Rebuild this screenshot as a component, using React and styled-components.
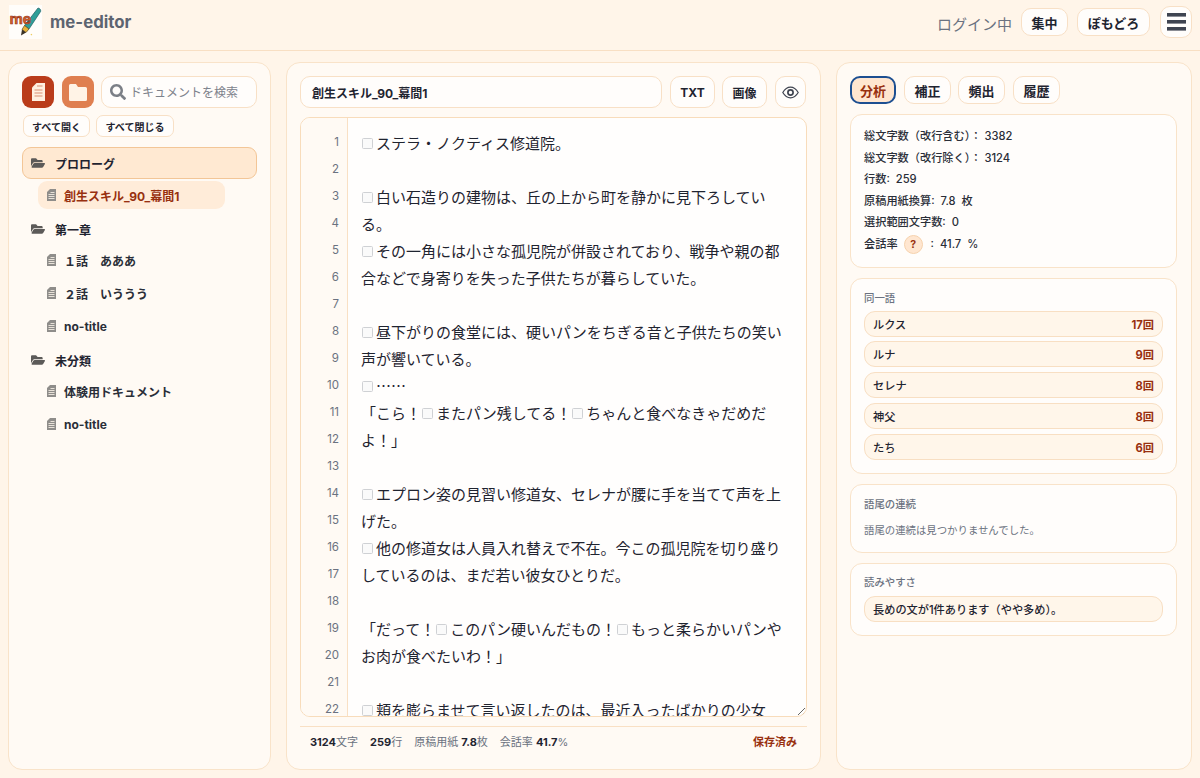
import styled, { createGlobalStyle } from 'styled-components';
import { FaFolderOpen, FaSearch } from 'react-icons/fa';

const font = `Inter, "Noto Sans CJK JP", sans-serif`;

const GlobalStyle = createGlobalStyle`
    * { box-sizing: border-box; }
    html, body {
        margin: 0;
        height: 100%;
        background: #fff5e9;
        color: #1f2430;
        font-family: ${font};
    }
`;

const Page = styled.div`
    height: 778px;
    display: flex;
    flex-direction: column;
    overflow: hidden;
`;

// header
const Header = styled.header`
    height: 51px;
    flex: none;
    display: flex;
    align-items: center;
    padding: 0 8px 6px 9px;
    border-bottom: 1px solid #f8dfc3;
`;

const Brand = styled.div`
    display: flex;
    align-items: center;
    gap: 8px;
    margin-right: auto;
    font-size: 16.8px;
    font-weight: 700;
    color: #5d6470;
    svg { display: block; }
`;

const LoginText = styled.span`
    font-size: 15px;
    color: #6b7280;
    margin: 2px 9px 0 0;
`;

const Button = styled.button`
    font-family: ${font};
    font-weight: 700;
    font-size: ${p => p.$size || 12}px;
    color: #1f2430;
    background: ${p => (p.$active ? '#ffe6d0' : '#fffdfb')};
    border: ${p => (p.$active ? '2px solid #1d4f91' : '1px solid #f8e0c6')};
    border-radius: ${p => p.$radius || 10}px;
    padding: 0;
    width: ${p => p.$w}px;
    height: ${p => p.$h}px;
    margin-right: ${p => p.$mr || 0}px;
    display: inline-flex;
    align-items: center;
    justify-content: center;
    flex: none;
`;

const TabButton = styled(Button)`
    font-size: 13px;
    color: ${p => (p.$active ? '#98300f' : '#1f2430')};
`;

const Bars = styled.svg`
    width: 19px;
    height: 18px;
    fill: #3f4450;
`;

// columns
const Main = styled.main`
    flex: 1;
    display: grid;
    grid-template-columns: 263px 535px 356px;
    gap: 15px;
    padding: 11px 8px 8px;
    min-height: 0;
`;

const Panel = styled.section`
    background: #fffaf4;
    border: 1px solid #f9e3c9;
    border-radius: 14px;
    padding: 13px;
    display: flex;
    flex-direction: column;
    min-height: 0;
`;

// left panel
const ToolRow = styled.div`
    display: flex;
    align-items: center;
    height: 32px;
`;

const SquareButton = styled.button`
    width: 32px;
    height: 32px;
    border: 0;
    border-radius: 9px;
    margin-right: ${p => p.$mr}px;
    background: ${p => p.$bg};
    display: flex;
    align-items: center;
    justify-content: center;
    padding: 0;
    flex: none;
`;

const SearchBox = styled.label`
    flex: 1;
    height: 32px;
    display: flex;
    align-items: center;
    gap: 4px;
    padding: 0 8px;
    background: #fffdfb;
    border: 1px solid #f8e0c6;
    border-radius: 10px;
    color: #7b7f86;
    font-size: 16px;
    svg { flex: none; }
`;

const SearchInput = styled.input`
    border: 0;
    outline: 0;
    background: none;
    width: 100%;
    padding: 0;
    font-family: ${font};
    font-size: 12px;
    &::placeholder { color: #7d828b; opacity: 1; }
`;

const ExpandRow = styled.div`
    display: flex;
    gap: 6px;
    margin: 7px 0 10px 1px;
`;

const SmallButton = styled(Button)`
    font-size: 10px;
    border-radius: 7px;
`;

const FolderRow = styled.div`
    height: 32px;
    display: flex;
    align-items: center;
    gap: 10px;
    padding-left: 8px;
    font-size: 12px;
    font-weight: 700;
    border-radius: 9px;
    border: 1px solid ${p => (p.$active ? '#f3c697' : 'transparent')};
    background: ${p => (p.$active ? '#ffe9d2' : 'transparent')};
    margin-top: ${p => p.$mt || 0}px;
    svg { color: #5c5a58; font-size: 14px; flex: none; }
`;

const DocRow = styled.div`
    height: 28px;
    width: 187px;
    margin: ${p => p.$mt || 0}px 0 0 16px;
    display: flex;
    align-items: center;
    gap: 8px;
    padding-left: 9px;
    font-size: 12px;
    font-weight: 700;
    border-radius: 9px;
    background: ${p => (p.$active ? '#ffecd9' : 'transparent')};
    color: ${p => (p.$active ? '#98300f' : '#2a2e38')};
    white-space: pre;
`;

const DocIconSvg = styled.svg`
    width: 9px;
    height: 12px;
    flex: none;
`;

const DocIcon = () => (
    <DocIconSvg viewBox="0 0 9 12">
        <path d="M3 0h6v12H0V3z" fill="#8f8d8a" />
        <path d="M3.500 3.500h4M1.500 5.500h6M1.500 7.500h6M1.500 9.500h6" stroke="#fff6ec" strokeWidth=".8" />
    </DocIconSvg>
);

// editor panel
const TitleRow = styled.div`
    display: flex;
    align-items: center;
    height: 32px;
    margin-bottom: 9px;
`;

const TitleInput = styled.input`
    width: 362px;
    height: 32px;
    margin-right: 8px;
    padding: 0 11px;
    flex: none;
    font-family: ${font};
    font-size: 12px;
    font-weight: 700;
    color: #1f2430;
    background: #fffdfb;
    border: 1px solid #f8e0c6;
    border-radius: 10px;
    outline: 0;
`;

const Editor = styled.div`
    height: 600px;
    display: flex;
    background: #fffefd;
    border: 1px solid #f8dcbb;
    border-radius: 10px;
    overflow: hidden;
`;

const Gutter = styled.div`
    width: 47px;
    flex: none;
    padding: 11px 8px 0 0;
    border-right: 1px solid #f9e0c4;
    background: #fffaf4;
    text-align: right;
`;

const LineNo = styled.div`
    height: 27px;
    line-height: 27px;
    font-size: 11.5px;
    color: #6b7280;
`;

const TextArea = styled.div`
    flex: 1;
    padding: 11px 14px 0 13px;
    overflow: hidden;
    resize: both;
    font-family: "Noto Sans CJK JP", sans-serif;
    font-size: 15px;
    line-height: 27px;
    color: #1f2430;
`;

const Para = styled.div`
    min-height: 27px;
`;

const Mark = styled.span`
    display: inline-block;
    width: 15px;
    height: 9px;
    position: relative;
    &::before {
        content: '';
        position: absolute;
        left: 1px;
        top: -2px;
        width: 9px;
        height: 9px;
        background: #fafafa;
        border: 1px solid #cfd1d4;
        border-radius: 1.5px;
    }
`;

const StatusBar = styled.div`
    margin-top: 9px;
    padding: 6px 10px 0;
    border-top: 1px solid #f9e0c4;
    display: flex;
    align-items: center;
    font-size: 11px;
    color: #6b7280;
    b { color: #1f2430; font-weight: 700; }
`;

const StatusItem = styled.span`
    margin-right: 12px;
`;

const Saved = styled.span`
    margin-left: auto;
    color: #98300f;
    font-weight: 700;
    font-size: 11px;
`;

// analysis panel
const Tabs = styled.div`
    display: flex;
    align-items: center;
    height: 28px;
    margin-bottom: 10px;
`;

const Card = styled.div`
    width: 327px;
    background: #fffdfb;
    border: 1px solid #f9e3c9;
    border-radius: 12px;
    padding: ${p => p.$pad};
    margin-bottom: 10px;
`;

const StatLine = styled.div`
    font-size: 11.2px;
    font-weight: 500;
    line-height: 21.6px;
    height: 21.6px;
    color: #2a2e38;
    white-space: pre;
    display: flex;
    align-items: center;
`;

const Help = styled.span`
    width: 19px;
    height: 19px;
    border-radius: 50%;
    background: #ffe6d0;
    border: 1px solid #f6d2ad;
    color: #98300f;
    font-size: 10.5px;
    font-weight: 700;
    display: inline-flex;
    align-items: center;
    justify-content: center;
    margin: 0 8px 0 6px;
`;

const CardLabel = styled.div`
    font-size: 10.4px;
    line-height: 14px;
    font-weight: 500;
    color: #6b7280;
    margin-bottom: ${p => p.$mb}px;
`;

const Note = styled.div`
    font-size: 10.4px;
    line-height: 14px;
    color: #6b7280;
`;

const Pill = styled.div`
    height: 26px;
    display: flex;
    align-items: center;
    justify-content: space-between;
    padding: 0 8px;
    background: #fff6ea;
    border: 1px solid #f8dfc3;
    border-radius: 11px;
    font-size: 11.2px;
    font-weight: 500;
    color: #1f2430;
    & + & { margin-top: 4.75px; }
`;

const Count = styled.span`
    color: #98300f;
    font-weight: 700;
`;

const LogoText = styled.text`
    font-family: "Liberation Sans", sans-serif;
    font-weight: 700;
    font-size: 15px;
`;

const Logo = () => (
    <svg width="33" height="34" viewBox="0 0 33 34">
        <rect width="33" height="34" fill="#fffdfa" />
        <path d="M29 3c2 .2 3 1.800 2.600 3.500L20 24l-4.500-3.500z" fill="#2f9f98" stroke="#1d5f63" strokeWidth=".7" />
        <path d="M15.500 20.500L20 24l-3 3.500-4-3z" fill="#e8b23a" stroke="#5a4620" strokeWidth=".7" />
        <path d="M13 24.500l4 3-5 3z" fill="#3a3226" />
        <path d="M22 29l.8 1.200" stroke="#eccb5a" strokeWidth="1.200" />
        <LogoText x="0.500" y="19" fill="#d9662a" stroke="#8e2f1c" strokeWidth=".6">me</LogoText>
    </svg>
);

const DocButtonIcon = () => (
    <svg width="13" height="18" viewBox="0 0 13 18">
        <path d="M4.500 0H13v18H0V4.500z" fill="#fff0e0" />
        <path d="M5 3h5.500M2.500 7h8M2.500 10h8M2.500 13h8" stroke="#d98f73" strokeWidth="1" />
    </svg>
);

const FolderButtonIcon = () => (
    <svg width="18" height="17" viewBox="0 0 18 17">
        <path d="M1.500 0H7l2 3h7.500A1.500 1.500 0 0 1 18 4.500v11a1.500 1.500 0 0 1-1.500 1.500h-15A1.500 1.500 0 0 1 0 15.500v-14A1.500 1.500 0 0 1 1.500 0z" fill="#fff3e6" />
    </svg>
);

const Eye = () => (
    <svg width="17" height="13" viewBox="0 0 17 13" fill="none" stroke="#3f4450" strokeWidth="1.2">
        <path d="M.8 6.500C3 2.800 5.500 1.200 8.500 1.200s5.500 1.600 7.700 5.300c-2.200 3.700-4.700 5.300-7.700 5.300S3 10.200.8 6.500z" />
        <circle cx="8.500" cy="6.500" r="2.600" strokeWidth="1.700" />
    </svg>
);

const lines = Array.from({ length: 22 }, (_, i) => i + 1);
const repeated = [['ルクス', 17], ['ルナ', 9], ['セレナ', 8], ['神父', 8], ['たち', 6]];

export default function App() {
    return (
        <Page lang="ja">
            <GlobalStyle />
            <Header>
                <Brand>
                    <Logo />
                    me-editor
                </Brand>
                <LoginText>ログイン中</LoginText>
                <Button $w={47} $h={28} $mr={9} $size={13}>集中</Button>
                <Button $w={73} $h={28} $mr={10} $size={13}>ぽもどろ</Button>
                <Button $w={32} $h={32}>
                    <Bars viewBox="0 0 19 18">
                        <rect width="19" height="3.600" y="0" />
                        <rect width="19" height="3.600" y="7" />
                        <rect width="19" height="3.600" y="14" />
                    </Bars>
                </Button>
            </Header>
            <Main>
                <Panel>
                    <ToolRow>
                        <SquareButton $bg="#ba3c1a" $mr={8}><DocButtonIcon /></SquareButton>
                        <SquareButton $bg="#df7f50" $mr={7}><FolderButtonIcon /></SquareButton>
                        <SearchBox>
                            <FaSearch />
                            <SearchInput placeholder="ドキュメントを検索" />
                        </SearchBox>
                    </ToolRow>
                    <ExpandRow>
                        <SmallButton $w={67} $h={22}>すべて開く</SmallButton>
                        <SmallButton $w={78} $h={22}>すべて閉じる</SmallButton>
                    </ExpandRow>
                    <FolderRow $active><FaFolderOpen />プロローグ</FolderRow>
                    <DocRow $active $mt={2}><DocIcon />創生スキル_90_幕間1</DocRow>
                    <FolderRow $mt={4}><FaFolderOpen />第一章</FolderRow>
                    <DocRow $mt={1}><DocIcon />１話　あああ</DocRow>
                    <DocRow $mt={5}><DocIcon />２話　いううう</DocRow>
                    <DocRow $mt={5}><DocIcon />no-title</DocRow>
                    <FolderRow $mt={4}><FaFolderOpen />未分類</FolderRow>
                    <DocRow $mt={1}><DocIcon />体験用ドキュメント</DocRow>
                    <DocRow $mt={5}><DocIcon />no-title</DocRow>
                </Panel>

                <Panel>
                    <TitleRow>
                        <TitleInput defaultValue="創生スキル_90_幕間1" />
                        <Button $w={45} $h={32} $mr={7}>TXT</Button>
                        <Button $w={45} $h={32} $mr={8}>画像</Button>
                        <Button $w={31} $h={32}><Eye /></Button>
                    </TitleRow>
                    <Editor>
                        <Gutter>
                            {lines.map(n => <LineNo key={n}>{n}</LineNo>)}
                        </Gutter>
                        <TextArea>
                            <Para><Mark />ステラ・ノクティス修道院。</Para>
                            <Para />
                            <Para><Mark />白い石造りの建物は、丘の上から町を静かに見下ろしている。</Para>
                            <Para><Mark />その一角には小さな孤児院が併設されており、戦争や親の都合などで身寄りを失った子供たちが暮らしていた。</Para>
                            <Para />
                            <Para><Mark />昼下がりの食堂には、硬いパンをちぎる音と子供たちの笑い声が響いている。</Para>
                            <Para><Mark />……</Para>
                            <Para>「こら！<Mark />またパン残してる！<Mark />ちゃんと食べなきゃだめだよ！」</Para>
                            <Para />
                            <Para><Mark />エプロン姿の見習い修道女、セレナが腰に手を当てて声を上げた。</Para>
                            <Para><Mark />他の修道女は人員入れ替えで不在。今この孤児院を切り盛りしているのは、まだ若い彼女ひとりだ。</Para>
                            <Para />
                            <Para>「だって！<Mark />このパン硬いんだもの！<Mark />もっと柔らかいパンやお肉が食べたいわ！」</Para>
                            <Para />
                            <Para><Mark />頬を膨らませて言い返したのは、最近入ったばかりの少女</Para>
                        </TextArea>
                    </Editor>
                    <StatusBar>
                        <StatusItem><b>3124</b>文字</StatusItem>
                        <StatusItem><b>259</b>行</StatusItem>
                        <StatusItem>原稿用紙 <b>7.8</b>枚</StatusItem>
                        <StatusItem>会話率 <b>41.7</b>%</StatusItem>
                        <Saved>保存済み</Saved>
                    </StatusBar>
                </Panel>

                <Panel>
                    <Tabs>
                        <TabButton $active $w={46} $h={28} $mr={8}>分析</TabButton>
                        <TabButton $w={47} $h={28} $mr={7}>補正</TabButton>
                        <TabButton $w={47} $h={28} $mr={8}>頻出</TabButton>
                        <TabButton $w={47} $h={28}>履歴</TabButton>
                    </Tabs>
                    <Card $pad="11px 13px 11px">
                        <StatLine>総文字数（改行含む）： 3382</StatLine>
                        <StatLine>総文字数（改行除く）： 3124</StatLine>
                        <StatLine>行数:  259</StatLine>
                        <StatLine>原稿用紙換算:  7.8  枚</StatLine>
                        <StatLine>選択範囲文字数:  0</StatLine>
                        <StatLine>会話率<Help>?</Help>:  41.7  %</StatLine>
                    </Card>
                    <Card $pad="13px 13px 13px">
                        <CardLabel $mb={5}>同一語</CardLabel>
                        {repeated.map(([word, n]) => (
                            <Pill key={word}>{word}<Count>{n}回</Count></Pill>
                        ))}
                    </Card>
                    <Card $pad="13px 13px 14px">
                        <CardLabel $mb={12}>語尾の連続</CardLabel>
                        <Note>語尾の連続は見つかりませんでした。</Note>
                    </Card>
                    <Card $pad="12px 13px 13px">
                        <CardLabel $mb={6}>読みやすさ</CardLabel>
                        <Pill>長めの文が1件あります（やや多め）。</Pill>
                    </Card>
                </Panel>
            </Main>
        </Page>
    );
}
